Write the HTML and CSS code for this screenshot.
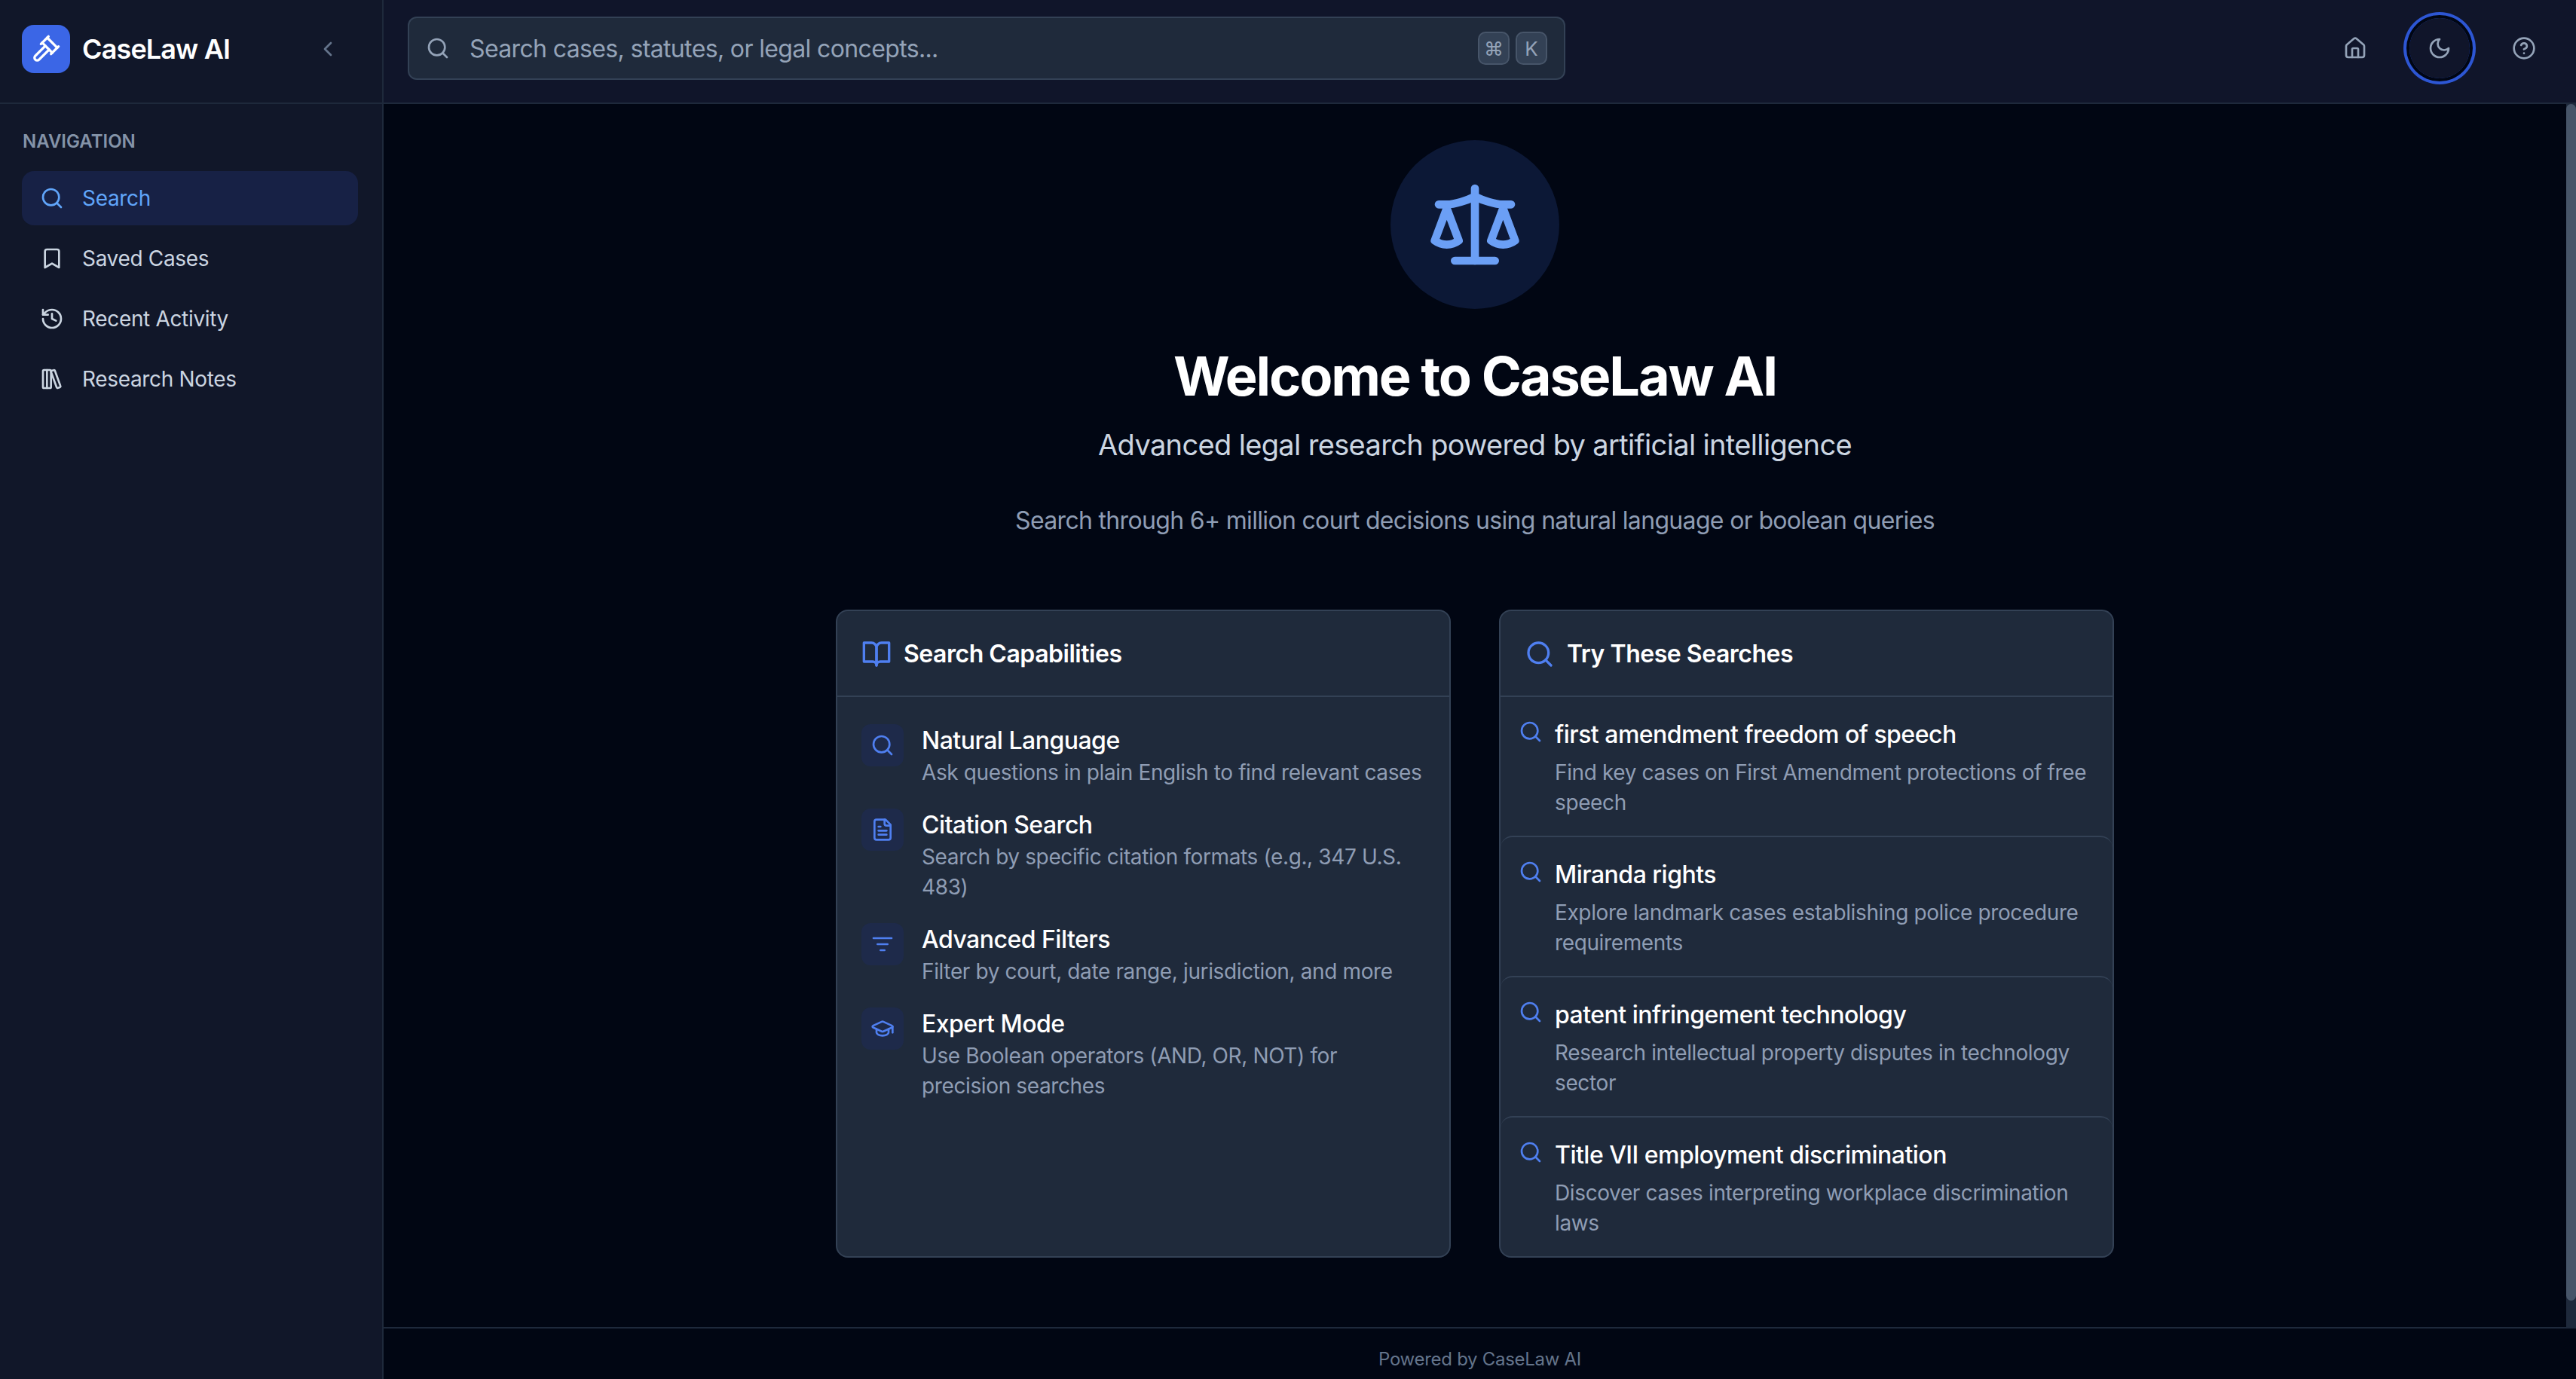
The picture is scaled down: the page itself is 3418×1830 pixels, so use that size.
FILE: index.html
```html
<!DOCTYPE html>
<html lang="en">
<head>
  <meta charset="utf-8">
  <title>CaseLaw AI</title>
  <link rel="stylesheet" href="styles.css">
</head>
<body>
<svg class="sprite" width="0" height="0">
  <symbol id="i-search" viewBox="0 0 24 24"><path d="m21 21-4.3-4.3"/><circle cx="11" cy="11" r="8"/></symbol>
</svg>

<aside class="sidebar">
  <div class="brand">
    <div class="logo">
      <svg class="icon icon-40" viewBox="0 0 24 24"><path d="m14.5 12.5-8 8a2.119 2.119 0 1 1-3-3l8-8"/><path d="m16 16 6-6"/><path d="m8 8 6-6"/><path d="m9 7 8 8"/><path d="m21 11-8-8"/></svg>
    </div>
    <span class="brand-name">CaseLaw AI</span>
    <svg class="icon icon-32 collapse" viewBox="0 0 24 24"><path d="m15 18-6-6 6-6"/></svg>
  </div>
  <nav class="nav">
    <div class="nav-label">NAVIGATION</div>
    <a class="nav-item active"><svg class="icon icon-32"><use href="#i-search"/></svg>Search</a>
    <a class="nav-item"><svg class="icon icon-32" viewBox="0 0 24 24"><path d="m19 21-7-4-7 4V5a2 2 0 0 1 2-2h10a2 2 0 0 1 2 2v16z"/></svg>Saved Cases</a>
    <a class="nav-item"><svg class="icon icon-32" viewBox="0 0 24 24"><path d="M3 12a9 9 0 1 0 9-9 9.75 9.75 0 0 0-6.74 2.74L3 8"/><path d="M3 3v5h5"/><path d="M12 7v5l4 2"/></svg>Recent Activity</a>
    <a class="nav-item"><svg class="icon icon-32" viewBox="0 0 24 24"><rect width="8" height="18" x="3" y="3" rx="1"/><path d="M7 3v18"/><path d="M20.4 18.9c.2.5-.1 1.1-.6 1.3l-1.9.7c-.5.2-1.1-.1-1.3-.6L11.1 5.1c-.2-.5.1-1.1.6-1.3l1.9-.7c.5-.2 1.1.1 1.3.6Z"/></svg>Research Notes</a>
  </nav>
</aside>

<div class="page">
  <header class="topbar">
    <div class="searchbar">
      <svg class="icon icon-32"><use href="#i-search"/></svg>
      <span class="placeholder">Search cases, statutes, or legal concepts...</span>
      <span class="keys"><kbd>⌘</kbd><kbd>K</kbd></span>
    </div>
    <div class="top-actions">
      <button class="round-btn"><svg class="icon icon-32" viewBox="0 0 24 24"><path d="M15 21v-8a1 1 0 0 0-1-1h-4a1 1 0 0 0-1 1v8"/><path d="M3 10a2 2 0 0 1 .709-1.528l7-5.999a2 2 0 0 1 2.582 0l7 5.999A2 2 0 0 1 21 10v9a2 2 0 0 1-2 2H5a2 2 0 0 1-2-2z"/></svg></button>
      <button class="round-btn focused"><svg class="icon icon-32" viewBox="0 0 24 24"><path d="M12 3a6 6 0 0 0 9 9 9 9 0 1 1-9-9Z"/></svg></button>
      <button class="round-btn"><svg class="icon icon-32" viewBox="0 0 24 24"><circle cx="12" cy="12" r="10"/><path d="M9.09 9a3 3 0 0 1 5.83 1c0 2-3 3-3 3"/><path d="M12 17h.01"/></svg></button>
    </div>
  </header>

  <div class="content">
    <main class="main">
      <section class="hero">
        <div class="hero-badge">
          <svg class="icon icon-128" viewBox="0 0 24 24"><path d="m16 16 3-8 3 8c-.87.65-1.92 1-3 1s-2.13-.35-3-1Z"/><path d="m2 16 3-8 3 8c-.87.65-1.92 1-3 1s-2.13-.35-3-1Z"/><path d="M7 21h10"/><path d="M12 3v18"/><path d="M3 7h2c2 0 5-1 7-2 2 1 5 2 7 2h2"/></svg>
        </div>
        <h1>Welcome to CaseLaw AI</h1>
        <p class="lead">Advanced legal research powered by artificial intelligence</p>
        <p class="sublead">Search through 6+ million court decisions using natural language or boolean queries</p>
      </section>

      <section class="cards">
        <div class="card">
          <div class="card-head">
            <svg class="icon icon-40" viewBox="0 0 24 24"><path d="M2 3h6a4 4 0 0 1 4 4v14a3 3 0 0 0-3-3H2z"/><path d="M22 3h-6a4 4 0 0 0-4 4v14a3 3 0 0 1 3-3h7z"/></svg>
            <h3>Search Capabilities</h3>
          </div>
          <div class="features">
            <div class="feature">
              <div class="feature-icon"><svg class="icon icon-32"><use href="#i-search"/></svg></div>
              <div>
                <div class="item-title">Natural Language</div>
                <div class="item-desc">Ask questions in plain English to find relevant cases</div>
              </div>
            </div>
            <div class="feature">
              <div class="feature-icon"><svg class="icon icon-32" viewBox="0 0 24 24"><path d="M15 2H6a2 2 0 0 0-2 2v16a2 2 0 0 0 2 2h12a2 2 0 0 0 2-2V7Z"/><path d="M14 2v4a2 2 0 0 0 2 2h4"/><path d="M10 9H8"/><path d="M16 13H8"/><path d="M16 17H8"/></svg></div>
              <div>
                <div class="item-title">Citation Search</div>
                <div class="item-desc">Search by specific citation formats (e.g., 347 U.S. 483)</div>
              </div>
            </div>
            <div class="feature">
              <div class="feature-icon"><svg class="icon icon-32" viewBox="0 0 24 24"><path d="M3 6h18"/><path d="M7 12h10"/><path d="M10 18h4"/></svg></div>
              <div>
                <div class="item-title">Advanced Filters</div>
                <div class="item-desc">Filter by court, date range, jurisdiction, and more</div>
              </div>
            </div>
            <div class="feature">
              <div class="feature-icon"><svg class="icon icon-32" viewBox="0 0 24 24"><path d="M21.42 10.922a1 1 0 0 0-.019-1.838L12.83 5.18a2 2 0 0 0-1.66 0L2.6 9.08a1 1 0 0 0 0 1.832l8.57 3.908a2 2 0 0 0 1.66 0z"/><path d="M22 10v6"/><path d="M6 12.5V16a6 3 0 0 0 12 0v-3.5"/></svg></div>
              <div>
                <div class="item-title">Expert Mode</div>
                <div class="item-desc">Use Boolean operators (AND, OR, NOT) for precision searches</div>
              </div>
            </div>
          </div>
        </div>

        <div class="card">
          <div class="card-head">
            <svg class="icon icon-40"><use href="#i-search"/></svg>
            <h3>Try These Searches</h3>
          </div>
          <div class="example">
            <svg class="icon icon-32"><use href="#i-search"/></svg>
            <div>
              <div class="item-title">first amendment freedom of speech</div>
              <div class="item-desc">Find key cases on First Amendment protections of free speech</div>
            </div>
          </div>
          <div class="example">
            <svg class="icon icon-32"><use href="#i-search"/></svg>
            <div>
              <div class="item-title">Miranda rights</div>
              <div class="item-desc">Explore landmark cases establishing police procedure requirements</div>
            </div>
          </div>
          <div class="example">
            <svg class="icon icon-32"><use href="#i-search"/></svg>
            <div>
              <div class="item-title">patent infringement technology</div>
              <div class="item-desc">Research intellectual property disputes in technology sector</div>
            </div>
          </div>
          <div class="example">
            <svg class="icon icon-32"><use href="#i-search"/></svg>
            <div>
              <div class="item-title">Title VII employment discrimination</div>
              <div class="item-desc">Discover cases interpreting workplace discrimination laws</div>
            </div>
          </div>
        </div>
      </section>
    </main>
    <div class="scroll-rail"><div class="scroll-thumb"></div></div>
  </div>

  <footer class="footer">Powered by CaseLaw AI</footer>
</div>
</body>
</html>
```

FILE: styles.css
```css
* {
  box-sizing: border-box;
}
html, body {
  height: 100%;
}
body {
  margin: 0;
  display: flex;
  overflow: hidden;
  background: #010613;
  color: #fff;
  font-family: Inter, "Noto Sans", sans-serif;
}
.sprite {
  position: absolute;
}

/* icons */
.icon {
  flex: none;
  display: block;
  fill: none;
  stroke: currentColor;
  stroke-width: 2;
  stroke-linecap: round;
  stroke-linejoin: round;
}
.icon-32 { width: 32px; height: 32px; }
.icon-40 { width: 40px; height: 40px; }
.icon-128 { width: 128px; height: 128px; }

/* sidebar */
.sidebar {
  flex: none;
  width: 509px;
  background: #111729;
  border-right: 2px solid #1e293b;
}
.brand {
  height: 138px;
  display: flex;
  align-items: center;
  padding: 0 0 6px 29px;
  border-bottom: 2px solid #1e293b;
}
.logo {
  width: 64px;
  height: 64px;
  border-radius: 16px;
  background: #3b66e6;
  display: flex;
  align-items: center;
  justify-content: center;
}
.brand-name {
  margin-left: 16px;
  font-size: 36px;
  font-weight: 600;
  letter-spacing: -0.024em;
}
.collapse {
  margin-left: auto;
  margin-right: 56px;
  color: #64748b;
}
.nav {
  padding: 32px 32px 0 29px;
}
.nav-label {
  font-size: 24px;
  line-height: 36px;
  font-weight: 600;
  color: #8493a8;
  margin-bottom: 21px;
  padding-left: 1px;
}
.nav-item {
  height: 72px;
  margin-bottom: 8px;
  padding-left: 24px;
  display: flex;
  align-items: center;
  gap: 24px;
  border-radius: 16px;
  font-size: 28px;
  letter-spacing: -0.012em;
  color: #cbd5e1;
}
.nav-item.active {
  background: #172145;
  color: #60a5fa;
}

/* top bar */
.page {
  flex: 1;
  min-width: 0;
  display: flex;
  flex-direction: column;
}
.topbar {
  flex: none;
  height: 138px;
  display: flex;
  align-items: center;
  justify-content: space-between;
  padding: 0 29px 8px 32px;
  background: #10152a;
  border-bottom: 2px solid #1e293b;
}
.searchbar {
  width: 1536px;
  height: 84px;
  display: flex;
  align-items: center;
  gap: 26px;
  padding: 0 22px;
  background: #1f2a3b;
  border: 2px solid #334155;
  border-radius: 12px;
  color: #94a3b8;
}
.placeholder {
  font-size: 32px;
  letter-spacing: -0.02em;
}
.keys {
  margin-left: auto;
  display: flex;
  gap: 8px;
}
kbd {
  width: 42px;
  height: 44px;
  display: flex;
  align-items: center;
  justify-content: center;
  background: #334155;
  border: 2px solid #475569;
  border-radius: 10px;
  font-family: Inter, "DejaVu Sans", sans-serif;
  font-size: 26px;
  color: #94a3b8;
}
.top-actions {
  display: flex;
  gap: 32px;
}
.round-btn {
  width: 80px;
  height: 80px;
  padding: 0;
  border: 0;
  border-radius: 50%;
  background: transparent;
  color: #94a3b8;
  display: flex;
  align-items: center;
  justify-content: center;
}
.round-btn.focused {
  box-shadow: 0 0 0 4px #010613, 0 0 0 8px #2d56d3;
}

/* main */
.content {
  flex: 1;
  min-height: 0;
  display: flex;
}
.main {
  flex: 1;
  min-width: 0;
  overflow: hidden;
  padding: 48px 48px 0;
}
.scroll-rail {
  flex: none;
  width: 13px;
  background: #1e293b;
}
.scroll-thumb {
  height: 1588px;
  background: #475569;
  border-radius: 8px;
}
.hero {
  text-align: center;
  margin-bottom: 94px;
}
.hero-badge {
  width: 224px;
  height: 224px;
  margin: 0 auto 49px;
  border-radius: 50%;
  background: #0c1836;
  color: #6b9ff5;
  display: flex;
  align-items: center;
  justify-content: center;
}
.hero h1 {
  margin: 0 0 23px;
  font-size: 72px;
  line-height: 80px;
  font-weight: 700;
  letter-spacing: -0.03em;
}
.lead {
  margin: 0 0 49px;
  font-size: 38px;
  line-height: 56px;
  letter-spacing: -0.017em;
  color: #cbd5e1;
}
.sublead {
  margin: 0 0 1px;
  font-size: 32px;
  line-height: 48px;
  letter-spacing: -0.021em;
  color: #8f9db4;
}

/* cards */
.cards {
  max-width: 1696px;
  margin: 0 auto;
  display: grid;
  grid-template-columns: 1fr 1fr;
  gap: 64px;
}
.card {
  background: #1f2a3b;
  border: 2px solid #334155;
  border-radius: 16px;
}
.card-head {
  height: 114px;
  padding: 2px 32px 0;
  display: flex;
  align-items: center;
  gap: 16px;
  border-bottom: 2px solid #334155;
  color: #4f7ff0;
}
.card-head h3 {
  margin: 0;
  font-size: 32px;
  line-height: 48px;
  font-weight: 600;
  letter-spacing: -0.015em;
  color: #fff;
}
.features {
  padding: 32px;
  display: flex;
  flex-direction: column;
  gap: 24px;
}
.feature {
  display: flex;
  align-items: flex-start;
  gap: 24px;
}
.feature-icon {
  flex: none;
  width: 56px;
  height: 56px;
  margin-top: 4px;
  border-radius: 12px;
  background: #1e2a4a;
  color: #4f7ff0;
  display: flex;
  align-items: center;
  justify-content: center;
}
.item-title {
  padding-top: 2px;
  margin-bottom: -2px;
  font-size: 32px;
  line-height: 48px;
  font-weight: 500;
  letter-spacing: -0.016em;
  color: #fff;
}
.item-desc {
  font-size: 28px;
  line-height: 40px;
  letter-spacing: -0.0135em;
  color: #8f9db4;
}
.example {
  padding: 24px;
  display: flex;
  align-items: flex-start;
  gap: 16px;
  border-top: 2px solid #334155;
  border-radius: 16px;
  color: #4f7ff0;
}
.card-head + .example {
  border-top: 0;
}
.example .icon {
  margin-top: 6px;
}
.example .item-desc {
  margin-top: 8px;
}

/* footer */
.footer {
  flex: none;
  height: 69px;
  padding-top: 14px;
  display: flex;
  align-items: center;
  justify-content: center;
  border-top: 2px solid #1e293b;
  font-size: 24px;
  letter-spacing: -0.012em;
  color: #64748b;
}
```
